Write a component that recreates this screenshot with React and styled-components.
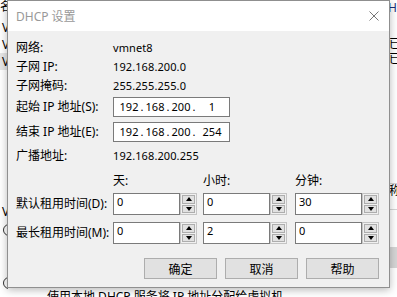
import React from "react";
import styled, { createGlobalStyle } from "styled-components";

const GlobalStyle = createGlobalStyle`
  html, body {
    margin: 0;
    padding: 0;
    width: 397px;
    height: 297px;
    overflow: hidden;
    background: #fff;
  }
  body {
    font-family: "Noto Sans", "Noto Sans CJK SC", sans-serif;
    font-size: 12px;
    color: #000;
  }
`;

const Desktop = styled.div`
  position: relative;
  width: 397px;
  height: 297px;
  overflow: hidden;
`;

/* window behind the dialog, only its edges show */
const BackWindow = styled.div`
  display: grid;
  grid-template-columns: 8px 1fr 9px;
  grid-template-rows: 289px 16px;
  height: 297px;
  overflow: hidden;
  background: #fff;
`;

const Strip = styled.div`
  grid-row: 1 / 3;
  grid-column: ${(p) => p.$col};
  display: flex;
  flex-direction: column;
  overflow: hidden;
`;

const StripRow = styled.div`
  height: ${(p) => p.$h}px;
  flex-shrink: 0;
  display: flex;
  align-items: ${(p) => (p.$top ? "flex-start" : "center")};
  padding-left: ${(p) => p.$pad || 0}px;
  background: ${(p) => p.$bg || "transparent"};
  border-top: ${(p) => (p.$lineTop ? "1px solid #d5d5d5" : "none")};
  border-bottom: ${(p) => (p.$lineBottom ? "1px solid #d5d5d5" : "none")};
  box-sizing: border-box;
  overflow: hidden;
  white-space: nowrap;
  line-height: 14px;
  color: ${(p) => p.$color || "#000"};
`;

const Radio = styled.span`
  width: 12px;
  height: 12px;
  flex-shrink: 0;
  border: 1px solid #333;
  border-radius: 50%;
  box-sizing: border-box;
  margin-left: 3px;
`;

const BottomText = styled.div`
  grid-column: 2;
  grid-row: 2;
  padding-left: 39px;
  line-height: 16px;
  white-space: nowrap;
  overflow: hidden;
`;

/* dialog */
const Dialog = styled.div`
  position: absolute;
  left: 7px;
  top: 0;
  width: 383px;
  height: 288px;
  box-sizing: border-box;
  border: 1px solid #8f8f8f;
  box-shadow: 0 2px 8px rgba(0, 0, 0, 0.28);
  background: #f0f0f0;
  display: flex;
  flex-direction: column;
`;

const TitleBar = styled.div`
  height: 30px;
  flex-shrink: 0;
  background: #fff;
  display: flex;
  align-items: center;
  justify-content: space-between;
  padding: 0 10px 0 8px;
`;

const Title = styled.span`
  color: #999;
  font-size: 12px;
`;

const Body = styled.div`
  padding: 7px 10px 9px 8px;
  display: flex;
  flex-direction: column;
`;

const InfoGrid = styled.div`
  display: grid;
  grid-template-columns: 97px 1fr;
  grid-auto-rows: 19px;
  align-items: center;
  line-height: 16px;
`;

const Value = styled.span`
  font-size: 11px;
  letter-spacing: 0.1px;
`;

const FieldRow = styled.div`
  display: grid;
  grid-template-columns: 97px 1fr;
  align-items: center;
  height: ${(p) => p.$h || 20}px;
  margin-top: ${(p) => p.$mt || 0}px;
  line-height: 16px;
`;

const IpBox = styled.div`
  width: 117px;
  height: 20px;
  box-sizing: border-box;
  border: 1px solid #7a7a7a;
  background: #fff;
  display: flex;
  align-items: center;
  padding-left: 4px;
  font-size: 11px;
`;

const IpField = styled.span`
  width: ${(p) => p.$w}px;
  text-align: center;
`;

const IpDot = styled.span`
  width: 4px;
  text-align: center;
`;

const LeaseGrid = styled.div`
  display: grid;
  grid-template-columns: 97px 90px 92px 1fr;
  grid-template-rows: ${(p) => p.$rows};
  row-gap: ${(p) => p.$gap || 0}px;
  align-items: center;
  margin-top: ${(p) => p.$mt || 0}px;
  line-height: 16px;
`;

const SpinGroup = styled.div`
  display: flex;
  height: 22px;
`;

const SpinInput = styled.div`
  width: 67px;
  height: 22px;
  box-sizing: border-box;
  border: 1px solid #7a7a7a;
  background: #fff;
  padding: 1px 3px;
  line-height: 14px;
  font-size: 11px;
`;

const Spinner = styled.div`
  width: 17px;
  height: 22px;
  box-sizing: border-box;
  border: 1px solid #c4c4c4;
  background: #f0f0f0;
  padding: 1px;
  display: flex;
  flex-direction: column;
  gap: 1px;
`;

const SpinButton = styled.div`
  flex: 1;
  border: 1px solid #adadad;
  background: #e1e1e1;
  display: flex;
  align-items: center;
  justify-content: center;
  &::after {
    content: "";
    width: 0;
    height: 0;
    border-left: 3.5px solid transparent;
    border-right: 3.5px solid transparent;
    ${(p) =>
      p.$down
        ? "border-top: 4px solid #000;"
        : "border-bottom: 4px solid #000;"}
  }
`;

const ButtonRow = styled.div`
  display: flex;
  justify-content: flex-end;
  gap: 8px;
  margin-top: 14px;
`;

const Button = styled.div`
  width: 73px;
  height: 21px;
  box-sizing: border-box;
  border: 1px solid #adadad;
  background: #e1e1e1;
  display: flex;
  align-items: center;
  justify-content: center;
  font-size: 12px;
`;

function CloseIcon() {
  return (
    <svg width="10" height="10" viewBox="0 0 10 10">
      <path d="M0.5 0.5L9.5 9.5M9.5 0.5L0.5 9.5" stroke="#777" strokeWidth="1" />
    </svg>
  );
}

function Spin({ value }) {
  return (
    <SpinGroup>
      <SpinInput>{value}</SpinInput>
      <Spinner>
        <SpinButton />
        <SpinButton $down />
      </Spinner>
    </SpinGroup>
  );
}

function IpAddress({ parts }) {
  return (
    <IpBox>
      <IpField $w={22}>{parts[0]}</IpField>
      <IpDot>.</IpDot>
      <IpField $w={22}>{parts[1]}</IpField>
      <IpDot>.</IpDot>
      <IpField $w={22}>{parts[2]}</IpField>
      <IpDot>.</IpDot>
      <IpField $w={32}>{parts[3]}</IpField>
    </IpBox>
  );
}

export default function App() {
  return (
    <Desktop>
      <GlobalStyle />
      <BackWindow>
        <Strip $col={1}>
          <StripRow $h={19} $top>名</StripRow>
          <StripRow $h={17} $pad={2}>V</StripRow>
          <StripRow $h={17} $pad={2}>V</StripRow>
          <StripRow $h={17} $pad={2} $bg="#e6e6e6">V</StripRow>
          <StripRow $h={134} />
          <StripRow $h={16} $pad={2}>V</StripRow>
          <StripRow $h={2} />
          <StripRow $h={16}><Radio /></StripRow>
          <StripRow $h={37} />
          <StripRow $h={16}><Radio /></StripRow>
        </Strip>
        <BottomText>使用本地 DHCP 服务将 IP 地址分配给虚拟机</BottomText>
        <Strip $col={3}>
          <StripRow $h={16} $color="#1b2f7a">H</StripRow>
          <StripRow $h={20} />
          <StripRow $h={15} $pad={1}>已</StripRow>
          <StripRow $h={15} $pad={1}>已</StripRow>
          <StripRow $h={117} />
          <StripRow $h={27} $lineTop $lineBottom $top $pad={1}>
            称
          </StripRow>
          <StripRow $h={37} />
          <StripRow $h={21} $bg="#d6d6d6" />
        </Strip>
      </BackWindow>

      <Dialog>
        <TitleBar>
          <Title>DHCP 设置</Title>
          <CloseIcon />
        </TitleBar>
        <Body>
          <InfoGrid>
            <span>网络:</span>
            <Value>vmnet8</Value>
            <span>子网 IP:</span>
            <Value>192.168.200.0</Value>
            <span>子网掩码:</span>
            <Value>255.255.255.0</Value>
          </InfoGrid>
          <FieldRow $mt={2}>
            <span>起始 IP 地址(S):</span>
            <IpAddress parts={["192", "168", "200", "1"]} />
          </FieldRow>
          <FieldRow $mt={5}>
            <span>结束 IP 地址(E):</span>
            <IpAddress parts={["192", "168", "200", "254"]} />
          </FieldRow>
          <FieldRow $mt={4} $h={19}>
            <span>广播地址:</span>
            <Value>192.168.200.255</Value>
          </FieldRow>
          <LeaseGrid $rows="16px" $mt={8}>
            <span />
            <span>天:</span>
            <span>小时:</span>
            <span>分钟:</span>
          </LeaseGrid>
          <LeaseGrid $rows="22px 22px" $gap={7} $mt={4}>
            <span>默认租用时间(D):</span>
            <Spin value="0" />
            <Spin value="0" />
            <Spin value="30" />
            <span>最长租用时间(M):</span>
            <Spin value="0" />
            <Spin value="2" />
            <Spin value="0" />
          </LeaseGrid>
          <ButtonRow>
            <Button>确定</Button>
            <Button>取消</Button>
            <Button>帮助</Button>
          </ButtonRow>
        </Body>
      </Dialog>
    </Desktop>
  );
}
